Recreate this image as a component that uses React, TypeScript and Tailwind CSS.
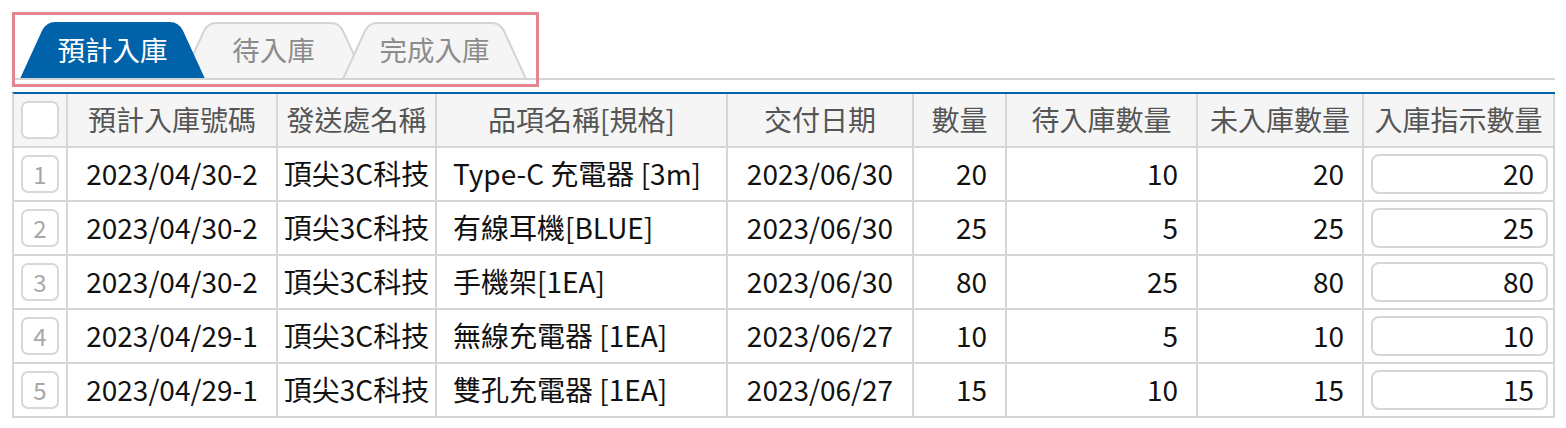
import React from "react";

const font = { fontFamily: '"Noto Sans CJK TC", "Noto Sans", sans-serif' };

type Row = {
  no: string;
  sender: string;
  item: string;
  date: string;
  qty: string;
  pending: string;
  notIn: string;
  instr: string;
};

const rows: Row[] = [
  { no: "2023/04/30-2", sender: "頂尖3C科技", item: "Type-C 充電器 [3m]", date: "2023/06/30", qty: "20", pending: "10", notIn: "20", instr: "20" },
  { no: "2023/04/30-2", sender: "頂尖3C科技", item: "有線耳機[BLUE]", date: "2023/06/30", qty: "25", pending: "5", notIn: "25", instr: "25" },
  { no: "2023/04/30-2", sender: "頂尖3C科技", item: "手機架[1EA]", date: "2023/06/30", qty: "80", pending: "25", notIn: "80", instr: "80" },
  { no: "2023/04/29-1", sender: "頂尖3C科技", item: "無線充電器 [1EA]", date: "2023/06/27", qty: "10", pending: "5", notIn: "10", instr: "10" },
  { no: "2023/04/29-1", sender: "頂尖3C科技", item: "雙孔充電器 [1EA]", date: "2023/06/27", qty: "15", pending: "10", notIn: "15", instr: "15" },
];

function TabShape({ active }: { active: boolean }) {
  return (
    <svg
      className="absolute inset-0"
      width="185"
      height="56"
      viewBox="0 0 185 56"
      fill="none"
    >
      <path
        d="M1 57 L23 9 Q27 1 35 1 L150 1 Q158 1 162 9 L184 57 Z"
        fill={active ? "#0062a9" : "#f5f5f5"}
        stroke={active ? "#0062a9" : "#d4d4d4"}
        strokeWidth="2"
        strokeLinejoin="round"
      />
    </svg>
  );
}

function Tab({ label, active, z, first }: { label: string; active: boolean; z: string; first?: boolean }) {
  return (
    <div
      className={`relative h-[56px] w-[185px] flex items-center justify-center ${z} ${first ? "" : "-ml-[24px]"}`}
    >
      <TabShape active={active} />
      <span
        className={`relative text-[27.5px] leading-none ${active ? "text-white" : "text-[#8c8c8c]"}`}
      >
        {label}
      </span>
    </div>
  );
}

const cell = "border-r-2 border-b-2 border-[#d6d6d6] flex items-center";

export default function App() {
  return (
    <div className="relative w-[1566px] h-[428px] bg-white" style={font}>
      {/* Tabs */}
      <div className="absolute left-[12px] top-[22px] w-[1543px] h-[58px] border-b-2 border-[#d4d4d4]">
        <div className="flex pl-[8px]">
          <Tab label="預計入庫" active z="z-20" first />
          <Tab label="待入庫" active={false} z="z-0" />
          <Tab label="完成入庫" active={false} z="z-10" />
        </div>
      </div>

      {/* Table */}
      <div className="absolute left-[12px] top-[92px] border-t-2 border-l-2 border-t-[#0062a9] border-l-[#d6d6d6]">
        <div className="grid grid-cols-[54px_210px_159px_291px_186px_93px_191px_166px_191px] text-[28px] leading-none">
          {/* header */}
          <div className={`${cell} h-[54px] justify-center bg-[#f5f5f5]`}>
            <div className="w-[38px] h-[38px] rounded-[7px] border-2 border-[#d8d8d8] bg-white" />
          </div>
          {["預計入庫號碼", "發送處名稱", "品項名稱[規格]", "交付日期", "數量", "待入庫數量", "未入庫數量", "入庫指示數量"].map((h) => (
            <div key={h} className={`${cell} h-[54px] justify-center pb-[2px] bg-[#f5f5f5] text-[#555555]`}>
              {h}
            </div>
          ))}
          {rows.map((r, i) => (
            <React.Fragment key={i}>
              <div className={`${cell} h-[54px] justify-center`}>
                <div className="w-[38px] h-[38px] rounded-[7px] border-2 border-[#d8d8d8] flex items-center justify-center text-[24px] text-[#a8a8a8]">
                  {i + 1}
                </div>
              </div>
              <div className={`${cell} h-[54px] justify-center pb-[2px] text-[#111]`}>{r.no}</div>
              <div className={`${cell} h-[54px] justify-center pb-[2px] text-[#111]`}>{r.sender}</div>
              <div className={`${cell} h-[54px] pl-[16px] pb-[2px] text-[#111]`}>{r.item}</div>
              <div className={`${cell} h-[54px] justify-center pb-[2px] text-[#111]`}>{r.date}</div>
              <div className={`${cell} h-[54px] justify-end pr-[18px] pb-[2px] text-[#111]`}>{r.qty}</div>
              <div className={`${cell} h-[54px] justify-end pr-[18px] pb-[2px] text-[#111]`}>{r.pending}</div>
              <div className={`${cell} h-[54px] justify-end pr-[18px] pb-[2px] text-[#111]`}>{r.notIn}</div>
              <div className={`${cell} h-[54px] pl-[7px] pr-[5px]`}>
                <div className="w-full h-[40px] rounded-[8px] border-2 border-[#d6d6d6] flex items-center justify-end pr-[12px] pb-[2px] text-[#111]">
                  {r.instr}
                </div>
              </div>
            </React.Fragment>
          ))}
        </div>
      </div>

      {/* Highlight overlay */}
      <div className="absolute left-[12px] top-[12px] w-[527px] h-[75px] border-[3px] border-[#e3868f] pointer-events-none z-30" />
    </div>
  );
}
